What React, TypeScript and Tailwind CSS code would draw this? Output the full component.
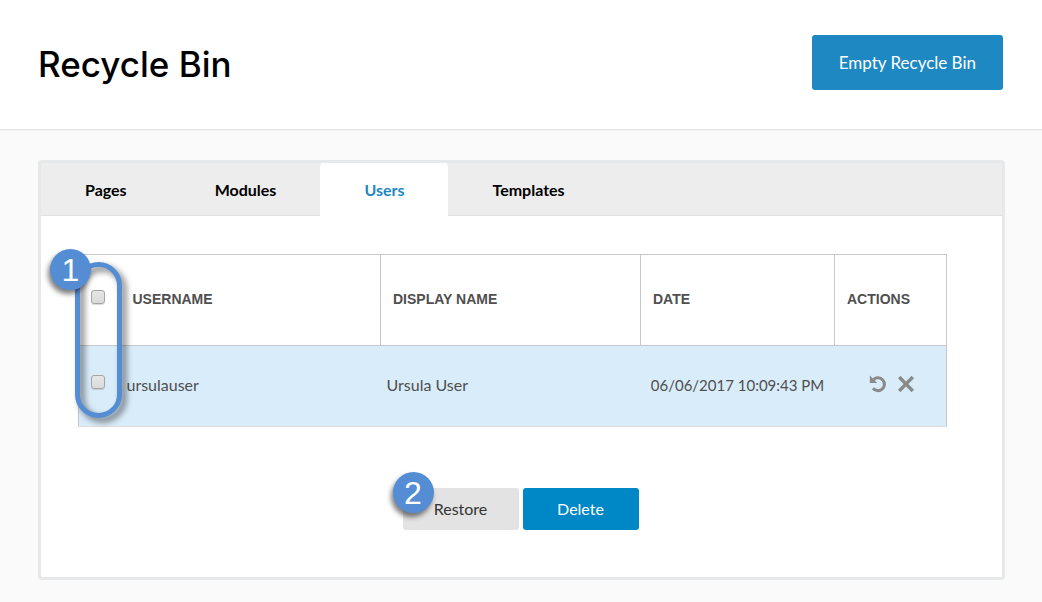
import { useState } from 'react';

const tabs = ['Pages', 'Modules', 'Users', 'Templates'];

const users = [
    { username: 'ursulauser', displayName: 'Ursula User', date: '06/06/2017 10:09:43 PM' },
];

const checkboxClass =
    'block size-[14px] appearance-none rounded-[3px] border border-[#a6a6a6] bg-linear-to-b from-[#e6e6e6] to-[#dadada] shadow-[0_1px_1px_rgba(0,0,0,0.15)] checked:bg-[#1e88c3] checked:bg-none';

const RestoreIcon = () => (
    <svg viewBox="0 0 18 18" className="size-[18px]" aria-hidden="true">
        <path d="M4.6 4.6A6.4 6.4 0 1 1 4 13.2" fill="none" stroke="#8a8a8a" strokeWidth="3" />
        <path d="M.8.6V8H8.2z" fill="#8a8a8a" />
    </svg>
);

const RemoveIcon = () => (
    <svg viewBox="0 0 18 18" className="size-[18px]" aria-hidden="true">
        <path d="M2.2 2 15.8 16M15.8 2 2.2 16" fill="none" stroke="#8a8a8a" strokeWidth="3.4" />
    </svg>
);

const Step = ({ number, className }: { number: number; className: string }) => (
    <span
        className={`absolute flex size-[41px] items-center justify-center rounded-full bg-[#548dd4] font-['Liberation_Sans',sans-serif] text-[32px] leading-none text-white shadow-[-2px_4px_5px_rgba(0,0,0,0.5)] ${className}`}
    >
        {number}
    </span>
);

const App = () => {
    const [activeTab, setActiveTab] = useState('Users');

    return (
        <div className="min-h-screen bg-[#fafafa] font-[Lato,sans-serif] text-base text-[#4f4f4f]">
            {/* Header */}
            <header className="flex items-start justify-between border-b border-[#e5e5e7] bg-white pt-[35px] pr-[39px] pb-9 pl-[38px] shadow-[0_1px_1px_rgba(0,0,0,0.03)]">
                <h1 className="font-[Inter,sans-serif] text-[35px] leading-[58px] font-medium text-black">Recycle Bin</h1>
                <button type="button" className="h-[55px] rounded-[3px] bg-[#1e88c3] px-[27px] text-[17px] text-white">
                    Empty Recycle Bin
                </button>
            </header>

            <main className="pt-[30px] pr-[37px] pb-[22px] pl-[38px]">
                <section className="rounded-[4px] border-[3px] border-[#e7e8ea] bg-white">
                    {/* Tabs */}
                    <div role="tablist" className="flex border-b border-[#e2e2e2] bg-[#ededed]">
                        {tabs.map((tab) => (
                            <button
                                key={tab}
                                type="button"
                                role="tab"
                                aria-selected={activeTab === tab}
                                onClick={() => setActiveTab(tab)}
                                className={`-mb-px h-[53px] px-11 font-bold ${
                                    activeTab === tab ? 'rounded-t-[4px] bg-white text-[#1e88c3]' : 'text-black'
                                }`}
                            >
                                {tab}
                            </button>
                        ))}
                    </div>

                    <div className="pt-[38px] pr-[55px] pb-[47px] pl-[37px]">
                        <div className="relative">
                            <table className="w-full table-fixed border-collapse border border-[#c8c8c8] border-b-[#dddddd]">
                                <thead>
                                    <tr className="h-[91px] border-b border-[#c8c8c8] text-left font-['Liberation_Sans',sans-serif] text-sm">
                                        <th className="w-[42px] pb-1.5 pl-3">
                                            <input type="checkbox" aria-label="Select all" className={checkboxClass} />
                                        </th>
                                        <th className="pb-0.5 pl-3">USERNAME</th>
                                        <th className="border-l border-[#c8c8c8] pb-0.5 pl-3">DISPLAY NAME</th>
                                        <th className="w-[194px] border-l border-[#c8c8c8] pb-0.5 pl-3">DATE</th>
                                        <th className="w-[112px] border-l border-[#c8c8c8] pb-0.5 pl-3">ACTIONS</th>
                                    </tr>
                                </thead>
                                <tbody>
                                    {users.map((user) => (
                                        <tr key={user.username} className="h-[81px] bg-[#d9ecfa]">
                                            <td className="pb-2 pl-3">
                                                <input
                                                    type="checkbox"
                                                    aria-label={`Select ${user.username}`}
                                                    className={checkboxClass}
                                                />
                                            </td>
                                            <td className="pb-0.5 pl-1.5">{user.username}</td>
                                            <td className="pb-0.5 pl-1.5">{user.displayName}</td>
                                            <td className="pb-0.5 text-center text-[15px] whitespace-nowrap">{user.date}</td>
                                            <td className="pb-1 pl-1">
                                                <div className="flex justify-center gap-[10px]">
                                                    <button type="button" aria-label="Restore user">
                                                        <RestoreIcon />
                                                    </button>
                                                    <button type="button" aria-label="Delete user">
                                                        <RemoveIcon />
                                                    </button>
                                                </div>
                                            </td>
                                        </tr>
                                    ))}
                                </tbody>
                            </table>

                            {/* Callout around the checkboxes */}
                            <div className="pointer-events-none absolute top-2 -left-[3px] h-[156px] w-[47px] rounded-full border-[5px] border-[#548dd4] drop-shadow-[4px_4px_3px_rgba(0,0,0,0.55)]" />
                            <Step number={1} className="-top-[5px] -left-7" />
                        </div>

                        <div className="mt-[61px] -mr-4 flex justify-center gap-1">
                            <div className="relative">
                                <button type="button" className="h-[42px] w-[116px] rounded-[3px] bg-[#e3e3e3] text-[#333333]">
                                    Restore
                                </button>
                                <Step number={2} className="-top-4 -left-[10px]" />
                            </div>
                            <button type="button" className="h-[42px] w-[116px] rounded-[3px] bg-[#0087c6] text-white">
                                Delete
                            </button>
                        </div>
                    </div>
                </section>
            </main>
        </div>
    );
};

export default App;
